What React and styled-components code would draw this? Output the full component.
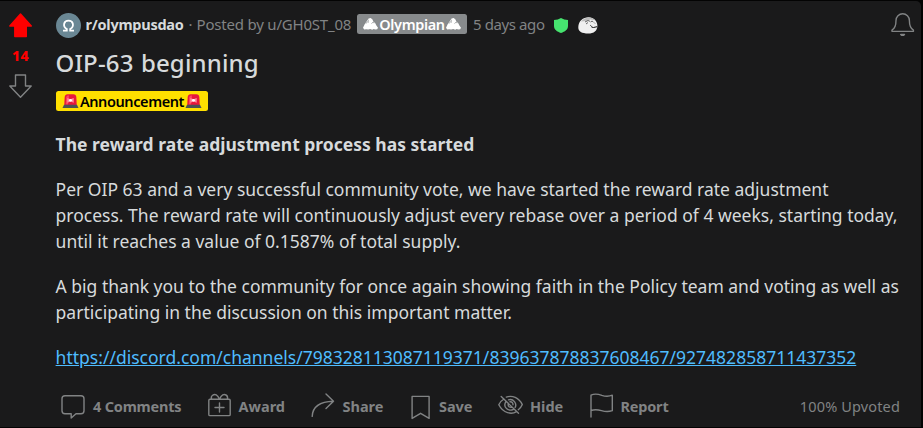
import React from "react";
import styled, { createGlobalStyle } from "styled-components";

const GlobalStyle = createGlobalStyle`
  body {
    margin: 0;
    background: #030303;
  }
  * {
    box-sizing: border-box;
  }
`;

const Post = styled.article`
  display: flex;
  width: 921px;
  height: 426px;
  margin-top: 1px;
  border-radius: 0 5px 0 0;
  background: #1a1a1b;
  color: #d7dadc;
  font-family: "Noto Sans", "Open Sans", sans-serif;
  overflow: hidden;
`;

const Votes = styled.aside`
  display: flex;
  flex-direction: column;
  align-items: center;
  width: 41px;
  padding-top: 12px;
  margin-right: 15px;
  flex: none;
`;

const Score = styled.span`
  height: 20px;
  margin: 8px 0 8px;
  color: #ff0000;
  font-size: 14px;
  font-weight: 800;
  line-height: 20px;
  letter-spacing: 0.4px;
`;

const Main = styled.div`
  display: flex;
  flex-direction: column;
  flex: 1;
  min-width: 0;
`;

const Header = styled.header`
  display: flex;
  align-items: center;
  height: 25px;
  margin: 12px 6px 0 0;
  white-space: nowrap;
  line-height: 20px;
`;

const Community = styled.span`
  width: 103px;
  margin-left: 4.5px;
  padding-bottom: 3px;
  font-size: 14.5px;
  font-weight: 700;
  letter-spacing: -0.25px;
`;

const Meta = styled.span`
  width: ${p => p.$width}px;
  padding: 0 0 3px ${p => p.$indent || 0}px;
  color: #818384;
  font-size: 15px;
  letter-spacing: ${p => p.$spacing || 0}px;
`;

const Flair = styled.span`
  display: inline-flex;
  align-items: center;
  justify-content: center;
  gap: ${p => p.$gap}px;
  width: ${p => p.$width}px;
  height: 20px;
  border-radius: 2.5px;
  background: ${p => p.$background};
  color: ${p => p.$color};
  font-size: 14.5px;
  font-weight: 600;
  line-height: 19px;
  letter-spacing: ${p => p.$spacing || 0}px;
`;

const HeaderFlair = styled(Flair)`
  margin: 0 0 3px 0.5px;
`;

const Badges = styled.span`
  display: flex;
  align-items: center;
  gap: 10px;
  flex: 1;
  padding-bottom: 1px;
`;

const Title = styled.h1`
  margin: 9px 0 13px -0.5px;
  font-size: 24px;
  font-weight: 500;
  line-height: 31px;
  letter-spacing: 0.15px;
  word-spacing: 1px;
`;

const Content = styled.div`
  margin: 20px 0 0 -0.4px;
  font-size: 17.5px;
  line-height: 26px;
  white-space: nowrap;

  p {
    margin: 0 0 19px;
  }
`;

const Link = styled.a`
  color: #4fbcff;
  text-decoration: underline;
`;

const Actions = styled.footer`
  display: flex;
  align-items: center;
  height: 30px;
  margin: 1px 21px 0 5px;
  color: #818384;
`;

const Action = styled.button`
  display: flex;
  align-items: center;
  gap: 7px;
  width: ${p => p.$width}px;
  padding: 0;
  border: 0;
  background: none;
  color: inherit;
  font: 700 14.5px/20px "Noto Sans", sans-serif;
  letter-spacing: ${p => p.$spacing || 0}px;
  white-space: nowrap;
  cursor: pointer;
`;

const Label = styled.span`
  padding-top: 1px;
`;

const Upvoted = styled.span`
  margin-left: auto;
  padding-top: 1px;
  font-size: 14.5px;
  line-height: 20px;
  letter-spacing: 0.15px;
`;

const Icon = styled.svg`
  display: block;
  flex: none;
  width: 25px;
  height: 25px;
  overflow: visible;
  fill: none;
  stroke: #818384;
  stroke-width: 1.4;
  stroke-linejoin: round;
  stroke-linecap: round;
`;

const UpvoteIcon = styled(Icon)`
  fill: #ff0000;
  stroke: #ff0000;
`;

const BellIcon = styled(Icon)`
  margin-bottom: 3px;
`;

const Glyph = styled.svg`
  display: block;
  flex: none;
`;

const Avatar = () => (
  <Glyph width="25" height="25" viewBox="0 0 25 25">
    <circle cx="12.5" cy="12.5" r="12.5" fill="#6a8794" />
    <path
      d="M7 17.6h3.8v-1.5C6.2 13 7.8 7.6 12.5 7.6s6.3 5.4 1.7 8.5v1.5H18"
      fill="none"
      stroke="#fff"
      strokeWidth="1.8"
    />
  </Glyph>
);

const Mountain = () => (
  <Glyph width="15" height="12" viewBox="0 0 15 12">
    <path
      d="M0 9.8 1.8 6 3.6 3.4 5.6.6 7.6 0l1.7 1.3 1.4 2.9 1.3.6 1.4 2.6L15 9.8l-.8 1.5-2 .3-1.5-.5-1.5.6-2-.6-2 .5-2-.4-2 .3Z"
      fill="#fff"
    />
    <path
      d="M3 5.6 4.8 3.4 6 4.4M8.6 5.6 10 4.2l.8 1M5.2 2.6 6 1.8"
      fill="none"
      stroke="#878a8c"
      strokeWidth=".8"
    />
  </Glyph>
);

const Siren = () => (
  <Glyph width="17" height="14" viewBox="0 0 17 14">
    <path d="M2.2 11.5 2.7 3Q3 .3 5.5.3h6Q14 .3 14.3 3l.5 8.5Z" fill="#e8173c" />
    <path d="M3.8 10.5 4.2 3.5Q4.4 1.5 6 1.5h1L6 10.5Z" fill="#ff4560" />
    <path d="m5.3 4 3.2 1.3L11.7 4v4.8L8.5 7.5 5.3 8.8Z" fill="#ff8fa0" />
    <circle cx="8.5" cy="6.3" r="1.4" fill="#fff" />
    <path d="M2 10.8h13l1.5 3.2H.5Z" fill="#4b5355" />
  </Glyph>
);

const Shield = () => (
  <Glyph width="14" height="15" viewBox="0 0 14 15">
    <path
      d="M7 0q3 2 7 2v6c0 3.8-3 5.5-7 7-4-1.5-7-3.2-7-7V2q4 0 7-2Z"
      fill="#46e36f"
    />
  </Glyph>
);

const Rock = () => (
  <Glyph width="20" height="17" viewBox="0 0 20 17">
    <path
      d="M.3 10C.5 4 5 .3 10.5.2c5-.1 8.9 4 8.9 8.5 0 5-3.5 7.8-9.2 7.8C4 16.5 0 14.5.3 10Z"
      fill="#efefef"
    />
    <path d="M3 4.5C7-.5 14-1 17.3 3.3l-5-.9-4 1.5Z" fill="#bcbcbc" />
    <path
      d="m7 5 3-1.5 2 .8M8 7l2-1.5M12.5 5l1.7-1 1 1.1M12 8l2 1.8M16 5.5l1 1"
      fill="none"
      stroke="#444"
      strokeWidth=".8"
    />
    <path d="m13.5 10 2 .5 3.6-.8" fill="none" stroke="#111" />
  </Glyph>
);

const UpArrow = () => (
  <UpvoteIcon viewBox="0 0 25 25">
    <path d="M12.5 1 23.3 13h-5v10.6H6.8V13h-5Z" />
  </UpvoteIcon>
);

const DownArrow = () => (
  <Icon viewBox="0 0 25 25">
    <path d="M7.5 1h10v11h5.7L12.5 23.3 1.8 12h5.7Z" />
  </Icon>
);

const Bell = () => (
  <BellIcon viewBox="0 0 25 25">
    <path d="M2.2 17.9q3.8-2.2 3.8-9.4a6.7 6.7 0 0 1 13.4 0q0 7.2 3.8 9.4.8 1.5-.4 1.5H2.6q-1.2 0-.4-1.5Z" />
    <path d="M10.7 22.4h3.8q-1.9 2-3.8 0Z" fill="#818384" />
  </BellIcon>
);

const actions = [
  {
    label: "4 Comments",
    width: 145.5,
    spacing: -0.2,
    icon: (
      <path d="M4 2.7h16q3 0 3 3v12q0 3-3 3h-5L10.2 25v-4.3H4q-3 0-3-3v-12q0-3 3-3Z" />
    )
  },
  {
    label: "Award",
    width: 104,
    icon: (
      <path d="M3 6.2h19q1.2 0 1.2 1.2v14q0 1.2-1.2 1.2H3q-1.2 0-1.2-1.2v-14q0-1.2 1.2-1.2ZM12.5 10v9M8 14.5h9M12.5 6.2C10.5 1.5 8 1 6 2 4.5 2.8 4 4.5 4.5 6.2M12.5 6.2C14.5 1.5 17 1 19 2q2 1 1.5 4.2" />
    )
  },
  {
    label: "Share",
    width: 96.5,
    icon: <path d="M1.2 23.4C1.5 14.4 8.2 8.6 22.5 8.2M15 1l7.5 7.2-7.5 7.3" />
  },
  {
    label: "Save",
    width: 91,
    spacing: -0.1,
    icon: <path d="M5.1 3.4h17v22l-8.5-5.1-8.5 5.1Z" />
  },
  {
    label: "Hide",
    width: 90.5,
    icon: (
      <path d="m3.2 3.5 17.3 16.8M6 6C3.5 7.4 1.7 9.5.8 11.8c4.5 8.8 13 10 17.6 6.8M8.3 4.1c6-2 12.5.5 16 7.5-.8 2-2.2 3.8-4 5.1M10.5 6.8c4.9-1.6 8.8 3.8 6.6 7.7M8 8.3c-3.7 6 2.5 10.6 7.5 8M10.4 10.6c-1 3 1.5 4.3 3.8 3.5M12 8.8c2-.2 3 1.1 3 3" />
    )
  },
  {
    label: "Report",
    width: 84,
    spacing: -0.2,
    icon: (
      <path d="M2 24V2.2c4-2 7-1.2 10.8.2 3.7 1.2 7 1.3 10.5-.2v15.5c-4 1.4-7.5 1-10.8-.1C8.8 16.5 6 16 2 17.5" />
    )
  }
];

const App = () => {
  return (
    <>
      <GlobalStyle />
      <Post>
        <Votes>
          <UpArrow />
          <Score>14</Score>
          <DownArrow />
        </Votes>
        <Main>
          <Header>
            <Avatar />
            <Community>r/olympusdao</Community>
            <Meta $width={8}>·</Meta>
            <Meta $width={160} $spacing={-0.2}>
              Posted by u/GH0ST_08
            </Meta>
            <HeaderFlair
              $width={110}
              $gap={1.5}
              $spacing={-0.35}
              $background="#878a8c"
              $color="#fff"
            >
              <Mountain />
              Olympian
              <Mountain />
            </HeaderFlair>
            <Meta $width={87} $indent={6} $spacing={-0.4}>
              5 days ago
            </Meta>
            <Badges>
              <Shield />
              <Rock />
            </Badges>
            <Bell />
          </Header>
          <Title>OIP-63 beginning</Title>
          <Flair
            $width={152}
            $gap={0.5}
            $spacing={-0.4}
            $background="#ffe000"
            $color="#000"
          >
            <Siren />
            Announcement
            <Siren />
          </Flair>
          <Content>
            <p>
              <strong>The reward rate adjustment process has started</strong>
            </p>
            <p>
              Per OIP 63 and a very successful community vote, we have started
              the reward rate adjustment
              <br />
              process. The reward rate will continuously adjust every rebase
              over a period of 4 weeks, starting today,
              <br />
              until it reaches a value of 0.1587% of total supply.
            </p>
            <p>
              A big thank you to the community for once again showing faith in
              the Policy team and voting as well as
              <br />
              participating in the discussion on this important matter.
            </p>
            <p>
              <Link href="https://discord.com/channels/798328113087119371/839637878837608467/927482858711437352">
                https://discord.com/channels/798328113087119371/839637878837608467/927482858711437352
              </Link>
            </p>
          </Content>
          <Actions>
            {actions.map(({ label, width, spacing, icon }) => (
              <Action key={label} $width={width} $spacing={spacing}>
                <Icon viewBox="0 0 25 25">{icon}</Icon>
                <Label>{label}</Label>
              </Action>
            ))}
            <Upvoted>100% Upvoted</Upvoted>
          </Actions>
        </Main>
      </Post>
    </>
  );
};

export default App;
